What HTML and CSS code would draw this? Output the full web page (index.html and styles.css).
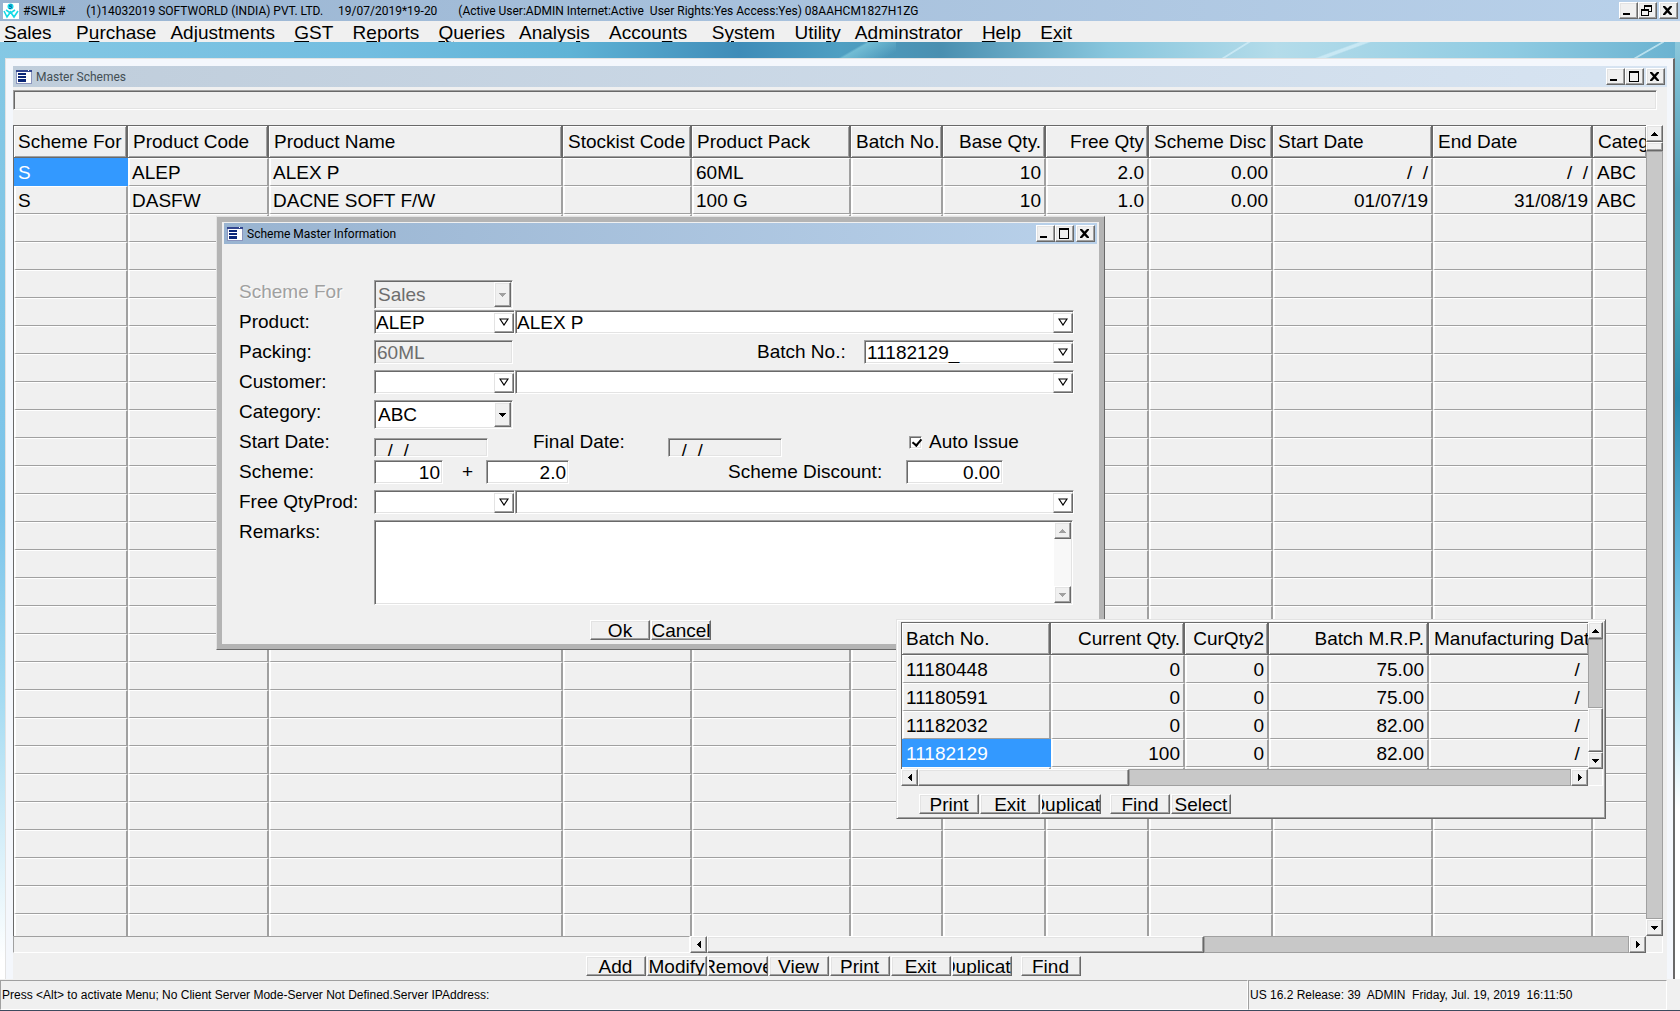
FILE: index.html
```html
<!DOCTYPE html>
<html lang="en">
<head>
    <meta charset="UTF-8">
    <meta name="viewport" content="width=device-width, initial-scale=1.0">
    <title>#SWIL# Master Schemes</title>
    <link rel="stylesheet" href="styles.css">
</head>
<body>

<!-- shared icons -->
<svg class="symbols" aria-hidden="true">
    <symbol id="min" viewBox="0 0 15 13"><path d="M3 9h7v2H3z"/></symbol>
    <symbol id="max" viewBox="0 0 15 13"><path d="M3 1h10v11H3zM4 3v8h8V3z" fill-rule="evenodd"/></symbol>
    <symbol id="restore" viewBox="0 0 15 13"><path d="M5 1h8v7h-3v4H2V5h3zM6 3v2h4v2h2V3zM3 7v4h6V7z" fill-rule="evenodd"/></symbol>
    <symbol id="close" viewBox="0 0 15 13"><path d="M3 2h2l2.500 2.500L10 2h2v1L9 6.500 12 10v1h-2L7.500 8.500 5 11H3v-1l3-3.500L3 3z"/></symbol>
    <symbol id="up" viewBox="0 0 7 4"><path d="M3 0h1v1h1v1h1v1h1v1H0V3h1V2h1V1h1z"/></symbol>
    <symbol id="down" viewBox="0 0 7 4"><path d="M0 0h7v1H6v1H5v1H4v1H3V3H2V2H1V1H0z"/></symbol>
    <symbol id="left" viewBox="0 0 4 7"><path d="M4 0v7H3V6H2V5H1V4H0V3h1V2h1V1h1V0z"/></symbol>
    <symbol id="right" viewBox="0 0 4 7"><path d="M0 0h1v1h1v1h1v1h1v1H3v1H2v1H1v1H0z"/></symbol>
    <symbol id="pick" viewBox="0 0 10 8"><path d="M1 1h8L5 7z" fill="none" stroke="#000" stroke-width="1.200"/></symbol>
    <symbol id="form" viewBox="0 0 16 14">
        <path d="M0 0h16v14H0z" fill="#8a94bd"/>
        <path d="M0 0h16v2H0z" fill="#33468f"/>
        <path d="M1 2h14v11H1z" fill="#fff"/>
        <path d="M2 3h8v2H2zM2 6h8v2H2zM2 9h8v3H2z" fill="#0c2878"/>
        <path d="M12 0h1v1h-1z" fill="#fff"/>
    </symbol>
</svg>

<header class="titlebar app-title">
    <svg class="logo" viewBox="0 0 16 16">
        <path d="M0 0h16v16H0z" fill="#fff"/>
        <circle cx="7.500" cy="3.500" r="3" fill="#14d9e6"/>
        <path d="M9 2H7l-1 1 3 1-1 1.500H6" fill="none" stroke="#0a6fb0"/>
        <path d="M1 8l3 6 3.500-5 3.500 5 4-6M3 7l4.500 3L12 7" fill="none" stroke="#14d9e6" stroke-width="1.600"/>
    </svg>
    <div class="caption">
        <span>#SWIL#</span>
        <span>(1)14032019 SOFTWORLD (INDIA) PVT. LTD.</span>
        <span>19/07/2019*19-20</span>
        <span>(Active User:ADMIN Internet:Active&nbsp; User Rights:Yes Access:Yes) 08AAHCM1827H1ZG</span>
    </div>
    <div class="controls">
        <button aria-label="Minimize"><svg><use href="#min"/></svg></button>
        <button aria-label="Restore"><svg><use href="#restore"/></svg></button>
        <button aria-label="Close"><svg><use href="#close"/></svg></button>
    </div>
</header>

<nav class="menu">
    <a href="#"><u>S</u>ales&nbsp;&nbsp;</a>
    <a href="#">P<u>u</u>rchase</a>
    <a href="#">Ad<u>j</u>ustments&nbsp;</a>
    <a href="#"><u>G</u>ST&nbsp;</a>
    <a href="#">R<u>e</u>ports&nbsp;</a>
    <a href="#"><u>Q</u>ueries</a>
    <a href="#">Analys<u>i</u>s&nbsp;</a>
    <a href="#">Accou<u>n</u>ts&nbsp;&nbsp;</a>
    <a href="#">S<u>y</u>stem&nbsp;</a>
    <a href="#">Utili<u>t</u>y</a>
    <a href="#">A<u>d</u>minstrator&nbsp;</a>
    <a href="#"><u>H</u>elp&nbsp;</a>
    <a href="#">E<u>x</u>it</a>
</nav>

<main class="desktop">
    <section class="window">
        <div class="titlebar inactive">
            <svg class="form-icon"><use href="#form"/></svg>
            <div class="caption">Master Schemes</div>
            <div class="controls">
                <button aria-label="Minimize"><svg><use href="#min"/></svg></button>
                <button aria-label="Maximize"><svg><use href="#max"/></svg></button>
                <button aria-label="Close"><svg><use href="#close"/></svg></button>
            </div>
        </div>
        <div class="client">
            <div class="message"></div>
            <div class="browse">
                <div class="rows">
                    <table id="schemes">
                        <colgroup>
                            <col class="c-for"><col class="c-code"><col class="c-name"><col class="c-stock">
                            <col class="c-pack"><col class="c-batch"><col class="c-base"><col class="c-free">
                            <col class="c-disc"><col class="c-start"><col class="c-end"><col>
                        </colgroup>
                        <thead>
                            <tr>
                                <th>Scheme For</th><th>Product Code</th><th>Product Name</th><th>Stockist Code</th>
                                <th>Product Pack</th><th>Batch No.</th><th class="num">Base Qty.</th><th class="num">Free Qty</th>
                                <th>Scheme Disc</th><th>Start Date</th><th>End Date</th><th>Category</th>
                            </tr>
                        </thead>
                        <tbody>
                            <tr>
                                <td class="selected">S</td><td>ALEP</td><td>ALEX P</td><td></td>
                                <td>60ML</td><td></td><td class="num">10</td><td class="num">2.0</td>
                                <td class="num">0.00</td><td class="num">/&nbsp; /</td><td class="num">/&nbsp; /</td><td>ABC</td>
                            </tr>
                            <tr>
                                <td>S</td><td>DASFW</td><td>DACNE SOFT F/W</td><td></td>
                                <td>100 G</td><td></td><td class="num">10</td><td class="num">1.0</td>
                                <td class="num">0.00</td><td class="num">01/07/19</td><td class="num">31/08/19</td><td>ABC</td>
                            </tr>
                        </tbody>
                    </table>
                </div>
                <div class="vscroll">
                    <button aria-label="Scroll up"><svg class="tri"><use href="#up"/></svg></button>
                    <div class="thumb short"></div>
                    <div class="track"></div>
                    <button aria-label="Scroll down"><svg class="tri"><use href="#down"/></svg></button>
                </div>
                <div class="hscroll">
                    <div class="locked"></div>
                    <button aria-label="Scroll left"><svg class="tri-side"><use href="#left"/></svg></button>
                    <div class="thumb wide"></div>
                    <div class="track"></div>
                    <button aria-label="Scroll right"><svg class="tri-side"><use href="#right"/></svg></button>
                </div>
                <div class="corner"></div>
            </div>
            <div class="actions">
                <button><span>Add</span></button>
                <button><span>Modify</span></button>
                <button><span>Remove</span></button>
                <button><span>View</span></button>
                <button><span>Print</span></button>
                <button><span>Exit</span></button>
                <button><span>Duplicate</span></button>
                <button class="apart"><span>Find</span></button>
            </div>
        </div>
    </section>
</main>

<footer class="status">
    <div class="status-text">Press &lt;Alt&gt; to activate Menu; No Client Server Mode-Server Not Defined.Server IPAddress:</div>
    <div class="status-info">US 16.2 Release: 39&nbsp; ADMIN&nbsp; Friday, Jul. 19, 2019&nbsp; 16:11:50</div>
</footer>

<!-- scheme entry window -->
<section class="dialog">
    <div class="titlebar">
        <svg class="form-icon"><use href="#form"/></svg>
        <div class="caption">Scheme Master Information</div>
        <div class="controls">
            <button aria-label="Minimize"><svg><use href="#min"/></svg></button>
            <button aria-label="Maximize"><svg><use href="#max"/></svg></button>
            <button aria-label="Close"><svg><use href="#close"/></svg></button>
        </div>
    </div>
    <form>
        <div class="line">
            <label class="name off" for="schemeFor">Scheme For</label>
            <div class="combo off">
                <select id="schemeFor" disabled><option>Sales</option></select>
                <span class="arrow"><svg class="tri"><use href="#down"/></svg></span>
            </div>
        </div>
        <div class="line">
            <label class="name" for="product">Product:</label>
            <div class="lookup code">
                <input type="text" id="product" value="ALEP">
                <button type="button" aria-label="Pick product code"><svg><use href="#pick"/></svg></button>
            </div>
            <div class="lookup full">
                <input type="text" aria-label="Product name" value="ALEX P">
                <button type="button" aria-label="Pick product"><svg><use href="#pick"/></svg></button>
            </div>
        </div>
        <div class="line">
            <label class="name" for="packing">Packing:</label>
            <input type="text" class="box packing" id="packing" value="60ML" disabled>
            <label class="batch-label" for="batch">Batch No.:</label>
            <div class="lookup batch">
                <input type="text" id="batch" value="11182129_">
                <button type="button" aria-label="Pick batch"><svg><use href="#pick"/></svg></button>
            </div>
        </div>
        <div class="line">
            <label class="name" for="customer">Customer:</label>
            <div class="lookup code">
                <input type="text" id="customer">
                <button type="button" aria-label="Pick customer code"><svg><use href="#pick"/></svg></button>
            </div>
            <div class="lookup full">
                <input type="text" aria-label="Customer name">
                <button type="button" aria-label="Pick customer"><svg><use href="#pick"/></svg></button>
            </div>
        </div>
        <div class="line">
            <label class="name" for="category">Category:</label>
            <div class="combo">
                <select id="category"><option>ABC</option></select>
                <span class="arrow"><svg class="tri"><use href="#down"/></svg></span>
            </div>
        </div>
        <div class="line">
            <label class="name" for="startDate">Start Date:</label>
            <input type="text" class="box date" id="startDate" value="&nbsp; /&nbsp; /">
            <label class="name final" for="finalDate">Final Date:</label>
            <input type="text" class="box date" id="finalDate" value="&nbsp; /&nbsp; /">
            <label class="auto"><input type="checkbox" checked>Auto Issue</label>
        </div>
        <div class="line">
            <label class="name" for="qty">Scheme:</label>
            <input type="text" class="box qty" id="qty" value="10">
            <span class="plus">+</span>
            <input type="text" class="box free" aria-label="Free quantity" value="2.0">
            <label class="discount-label" for="discount">Scheme Discount:</label>
            <input type="text" class="box discount" id="discount" value="0.00">
        </div>
        <div class="line">
            <label class="name" for="freeProd">Free QtyProd:</label>
            <div class="lookup code">
                <input type="text" id="freeProd">
                <button type="button" aria-label="Pick free product code"><svg><use href="#pick"/></svg></button>
            </div>
            <div class="lookup full">
                <input type="text" aria-label="Free product name">
                <button type="button" aria-label="Pick free product"><svg><use href="#pick"/></svg></button>
            </div>
        </div>
        <div class="line tall">
            <label class="name" for="remarks">Remarks:</label>
            <div class="memo">
                <textarea id="remarks"></textarea>
                <div class="vscroll off">
                    <button type="button" aria-label="Scroll up" disabled><svg class="tri"><use href="#up"/></svg></button>
                    <div class="track"></div>
                    <button type="button" aria-label="Scroll down" disabled><svg class="tri"><use href="#down"/></svg></button>
                </div>
            </div>
        </div>
        <div class="actions">
            <button type="button"><span>Ok</span></button>
            <button type="button"><span>Cancel</span></button>
        </div>
    </form>
</section>

<!-- batch list under the Batch No. field -->
<section class="popup">
    <div class="browse">
        <div class="rows">
            <table>
                <colgroup>
                    <col class="b-no"><col class="b-qty"><col class="b-qty2"><col class="b-mrp"><col>
                </colgroup>
                <thead>
                    <tr><th>Batch No.</th><th class="num">Current Qty.</th><th class="num">CurQty2</th><th class="num">Batch M.R.P.</th><th>Manufacturing Date</th></tr>
                </thead>
                <tbody>
                    <tr><td>11180448</td><td class="num">0</td><td class="num">0</td><td class="num">75.00</td><td class="num">/&nbsp;</td></tr>
                    <tr><td>11180591</td><td class="num">0</td><td class="num">0</td><td class="num">75.00</td><td class="num">/&nbsp;</td></tr>
                    <tr><td>11182032</td><td class="num">0</td><td class="num">0</td><td class="num">82.00</td><td class="num">/&nbsp;</td></tr>
                    <tr><td class="selected">11182129</td><td class="num">100</td><td class="num">0</td><td class="num">82.00</td><td class="num">/&nbsp;</td></tr>
                    <tr><td></td><td></td><td></td><td></td><td></td></tr>
                </tbody>
            </table>
        </div>
        <div class="vscroll">
            <button aria-label="Scroll up"><svg class="tri"><use href="#up"/></svg></button>
            <div class="track"></div>
            <div class="thumb low"></div>
            <button aria-label="Scroll down"><svg class="tri"><use href="#down"/></svg></button>
        </div>
        <div class="hscroll">
            <button aria-label="Scroll left"><svg class="tri-side"><use href="#left"/></svg></button>
            <div class="thumb mid"></div>
            <div class="track"></div>
            <button aria-label="Scroll right"><svg class="tri-side"><use href="#right"/></svg></button>
        </div>
        <div class="corner"></div>
    </div>
    <div class="actions">
        <button><span>Print</span></button>
        <button><span>Exit</span></button>
        <button><span>Duplicate</span></button>
        <button class="apart"><span>Find</span></button>
        <button><span>Select</span></button>
    </div>
</section>

<script>
    // fill the rest of the browse with empty rows
    const body = document.querySelector('#schemes tbody');
    const blank = '<tr>' + '<td></td>'.repeat(12) + '</tr>';
    body.insertAdjacentHTML('beforeend', blank.repeat(26));
</script>

</body>
</html>
```

FILE: styles.css
```css
* {
    box-sizing: border-box;
}
body {
    margin: 0;
    height: 100vh;
    display: flex;
    flex-direction: column;
    position: relative;
    overflow: hidden;
    background: #f0f0f0;
    color: #000;
    font-family: "Liberation Sans", Arial, sans-serif;
    font-size: 19px;
}
button, input, select, textarea {
    font: inherit;
    color: inherit;
    margin: 0;
    padding: 0;
    border: 0;
    border-radius: 0;
    outline: none;
}
.symbols {
    display: none;
}

/* title bars */
.titlebar {
    display: flex;
    align-items: center;
    flex: none;
    height: 21px;
    padding: 0 2px 0 3px;
    background: linear-gradient(90deg, #99b4d1, #b9d1ea);
    font-family: Roboto, "Open Sans", sans-serif;
    font-size: 12px;
}
.titlebar.inactive {
    background: linear-gradient(90deg, #bfcddb, #d7e4f2);
    color: #434e54;
}
.titlebar .caption {
    flex: 1;
    padding-left: 4px;
    white-space: nowrap;
}
.app-title .caption span {
    margin-right: 12px;
}
.app-title .caption span:nth-child(odd) {
    margin-right: 18px;
}
.logo {
    width: 16px;
    height: 16px;
}
.form-icon {
    width: 16px;
    height: 14px;
}
.controls {
    display: flex;
}
.controls button {
    width: 19px;
    height: 17px;
}
.controls button:last-child {
    margin-left: 2px;
}
.controls svg {
    display: block;
    width: 15px;
    height: 13px;
}

/* raised faces */
.controls button,
.vscroll button,
.hscroll button,
.thumb,
.arrow,
.actions button {
    background: #f0f0f0;
    border: 1px solid;
    border-color: #fff #696969 #696969 #fff;
    box-shadow: inset -1px -1px #a0a0a0, inset 1px 1px #e3e3e3;
}

/* menu */
.menu {
    display: flex;
    flex: none;
    height: 21px;
    padding-left: 4px;
    line-height: 23px;
    background: #f0f0f0;
}
.menu a {
    margin-right: 14px;
    color: #000;
    text-decoration: none;
}
.menu u {
    text-underline-offset: 2px;
}

/* wallpaper and main window */
.desktop {
    flex: 1;
    min-height: 0;
    display: flex;
    padding: 16px 5px 0;
    background:
        linear-gradient(180deg, #8cc8dc, #4a9bb5 16%, #46a3b4 27%, #2585aa 38%, #5cb5dd 55%, #a0dcf2 68%, #fff 82%) right / 5px 100% no-repeat,
        linear-gradient(180deg, #85c8e4, #7cc4ea 50%, #a5dbf2 70%, #fff 98%) left / 5px 100% no-repeat,
        linear-gradient(148deg, transparent 46%, #c8e8f4 49%, #c8e8f4 52%, transparent 55%) 74% 0 / 30px 16px no-repeat,
        linear-gradient(160deg, transparent 44%, #c8e8f4 48%, #c8e8f4 54%, transparent 58%) 81% 0 / 60px 16px no-repeat,
        linear-gradient(150deg, transparent 46%, #b8e0ee 49%, #b8e0ee 52%, transparent 55%) 99% 0 / 30px 16px no-repeat,
        linear-gradient(150deg, transparent 46%, #72bcd4 50%, transparent 90%) 51% 0 / 80px 16px no-repeat,
        linear-gradient(90deg, #85c8e4, #72bde0 22%, #5fb3d6 34%, #3f8cb8 44%, #4f9fc2 50%, #4a8fb0 56%, #88c6dd 66%, #b4dcea 76%, #8fcbe2 90%, #6ab2d0);
}
.window {
    flex: 1;
    min-width: 0;
    display: flex;
    flex-direction: column;
    padding: 7px 6px 0 7px;
    background: #f4f7fc;
    border: 1px solid #e3e3e3;
    border-right: 2px solid #696969;
    border-bottom: 0;
}
.client {
    flex: 1;
    min-height: 0;
    display: flex;
    flex-direction: column;
    padding: 3px 4px 3px 0;
    background: #f0f0f0;
}
.message {
    flex: none;
    height: 20px;
    margin: 0 6px 15px 0;
    border: 1px solid;
    border-color: #a0a0a0 #fff #fff #a0a0a0;
    box-shadow: inset 1px 1px #696969, inset -1px -1px #e3e3e3;
}

/* browses */
.browse {
    display: grid;
    grid-template-columns: minmax(0, 1fr) 17px;
    grid-template-rows: minmax(0, 1fr) 17px;
}
.window .browse {
    flex: 1;
    min-height: 0;
}
.rows {
    overflow: hidden;
    border-left: 1px solid #696969;
}
table {
    width: 100%;
    table-layout: fixed;
    border-collapse: separate;
    border-spacing: 0;
}
th, td {
    overflow: hidden;
    white-space: nowrap;
    text-align: left;
    font-weight: normal;
}
th {
    height: 33px;
    padding: 0 3px 0 5px;
    border: 1px solid #696969;
    border-left: 0;
    border-right-width: 2px;
    box-shadow: inset 1px 1px #fff, inset -1px -1px #a0a0a0;
}
th:first-child {
    padding-left: 4px;
}
td {
    height: 28px;
    padding: 1px 3px 0 2px;
    border: solid;
    border-width: 1px 2px;
    border-color: #fff #a0a0a0 #a0a0a0 #fff;
}
th:last-child, td:last-child {
    border-right: 0;
}
.num {
    text-align: right;
}
.selected {
    background: #3399ff;
    border-color: #3399ff;
    color: #fff;
}
.c-for { width: 114px; }
.c-code { width: 141px; }
.c-name { width: 294px; }
.c-stock { width: 129px; }
.c-pack { width: 159px; }
.c-batch { width: 92px; }
.c-base { width: 103px; }
.c-free { width: 103px; }
.c-disc { width: 124px; }
.c-start { width: 160px; }
.c-end { width: 160px; }
.b-no { width: 149px; }
.b-qty { width: 134px; }
.b-qty2 { width: 84px; }
.b-mrp { width: 160px; }

/* scroll bars */
.vscroll, .hscroll {
    display: flex;
}
.vscroll {
    flex-direction: column;
}
.vscroll button, .hscroll button {
    display: flex;
    align-items: center;
    justify-content: center;
    flex: none;
    width: 17px;
    height: 17px;
}
.track {
    flex: 1;
    background: #c8c8c8;
    border: 1px solid #a0a0a0;
}
.tri {
    width: 7px;
    height: 4px;
}
.tri-side {
    width: 4px;
    height: 7px;
}
.thumb.short { height: 9px; }
.thumb.low { height: 44px; }
.thumb.wide { width: 497px; }
.thumb.mid { width: 211px; }
.locked {
    width: 677px;
    border: 1px solid;
    border-color: #a0a0a0 #fff #fff #a0a0a0;
}
.corner {
    border: 1px solid;
    border-color: transparent #fff #fff transparent;
}

/* button strips */
.actions {
    display: flex;
    gap: 1px;
}
.actions button {
    display: flex;
    justify-content: center;
    width: 60px;
    height: 20px;
    padding: 0 1px;
    overflow: hidden;
    line-height: 20px;
}
.actions span {
    flex: none;
}
.actions .apart {
    margin-left: 8px;
}
.window .actions {
    flex: none;
    justify-content: center;
    margin: 3px 10px 0 0;
}

/* status bar */
.status {
    display: flex;
    flex: none;
    height: 32px;
    padding: 1px 13px 0 0;
    border-bottom: 1px solid #3d4a5e;
    background: #f0f0f0;
    font-size: 12px;
    line-height: 28px;
}
.status div {
    padding-left: 1px;
    border: 1px solid;
    border-color: #a0a0a0 #fff #fff #a0a0a0;
    white-space: nowrap;
}
.status-text {
    flex: 1;
}
.status-info {
    width: 419px;
}

/* scheme entry window */
.dialog {
    position: absolute;
    left: 216px;
    top: 216px;
    width: 889px;
    padding: 6px 7px 7px;
    background: #f0f0f0;
    border: 1px solid;
    border-color: #e3e3e3 #696969 #696969 #e3e3e3;
    box-shadow: inset 0 0 0 5px #b4b4b4;
}
.dialog form {
    padding: 36px 15px 2px;
}
.line {
    display: flex;
    align-items: flex-start;
    height: 30px;
    margin-right: 8px;
    line-height: 24px;
}
.line.tall {
    height: 100px;
}
.name {
    flex: none;
    width: 135px;
}
.name.off {
    color: #a0a0a0;
    text-shadow: 1px 1px #fff;
}
.combo, .lookup, .box, .memo {
    background: #fff;
    border: 1px solid;
    border-color: #a0a0a0 #fff #fff #a0a0a0;
    box-shadow: inset 1px 1px #696969, inset -1px -1px #e3e3e3;
}
.combo {
    display: flex;
    width: 139px;
    height: 29px;
    padding: 1px;
}
.combo select {
    flex: 1;
    appearance: none;
    padding-left: 2px;
    background: transparent;
    opacity: 1;
}
.combo.off {
    background: #f0f0f0;
    color: #6d6d6d;
}
.arrow {
    display: flex;
    align-items: center;
    justify-content: center;
    width: 17px;
}
.off .tri {
    fill: #a0a0a0;
}
.lookup {
    display: flex;
    height: 24px;
    padding-left: 1px;
}
.lookup input {
    flex: 1;
    min-width: 0;
    height: 20px;
    margin-top: 2px;
    background: transparent;
}
.lookup button {
    width: 20px;
    height: 20px;
    margin: 2px 0 0;
    background: #fff;
    border: 1px solid;
    border-color: #e3e3e3 #696969 #696969 #e3e3e3;
    box-shadow: inset -1px -1px #a0a0a0;
}
.lookup button svg {
    display: block;
    width: 10px;
    height: 8px;
    margin: 0 auto 2px;
}
.lookup.code {
    width: 141px;
}
.lookup.full {
    flex: 1;
}
.lookup.batch {
    width: 210px;
    padding-left: 2px;
}
.batch-label {
    width: 107px;
    margin-left: auto;
}
.box {
    height: 24px;
    padding: 2px 2px 0;
}
.box:disabled {
    background: #f0f0f0;
    color: #6d6d6d;
}
.box.packing {
    width: 139px;
}
.box.date {
    width: 114px;
    height: 19px;
    margin-top: 8px;
    padding: 6px 2px 0;
    background: #f0f0f0;
}
.name.final {
    margin-left: 45px;
}
.auto {
    display: flex;
    align-items: center;
    margin-left: 127px;
}
.auto input {
    appearance: none;
    width: 13px;
    height: 13px;
    margin-right: 7px;
    background: #fff;
    border: 1px solid;
    border-color: #a0a0a0 #fff #fff #a0a0a0;
    box-shadow: inset 1px 1px #696969, inset -1px -1px #e3e3e3;
}
.auto input:checked::after {
    content: "";
    display: block;
    width: 4px;
    height: 7px;
    margin: 0 0 0 4px;
    border: solid #000;
    border-width: 0 2px 2px 0;
    transform: rotate(40deg);
}
.box.qty, .box.free, .box.discount {
    text-align: right;
}
.box.qty {
    width: 69px;
}
.plus {
    width: 43px;
    padding-left: 6px;
    text-align: center;
}
.box.free {
    width: 83px;
}
.discount-label {
    width: 178px;
    margin-left: 159px;
}
.box.discount {
    width: 97px;
}
.memo {
    display: flex;
    flex: 1;
    height: 85px;
    margin-right: 1px;
    padding: 1px;
}
.memo textarea {
    flex: 1;
    resize: none;
    background: transparent;
}
.memo .track {
    border: 0;
    background: #f8f8f8;
}
.dialog .actions {
    justify-content: center;
    margin-right: 20px;
}

/* batch list */
.popup {
    position: absolute;
    left: 896px;
    top: 619px;
    width: 710px;
    padding: 2px 2px 4px 4px;
    background: #f0f0f0;
    border: 1px solid;
    border-color: #e3e3e3 #696969 #696969 #e3e3e3;
    box-shadow: inset 1px 1px #fff, inset -1px -1px #a0a0a0;
}
.popup .browse {
    grid-template-columns: minmax(0, 1fr) 15px;
    grid-template-rows: 147px 17px;
}
.popup .vscroll button {
    width: 15px;
}
.popup .actions {
    margin: 8px 0 0 18px;
}
```
